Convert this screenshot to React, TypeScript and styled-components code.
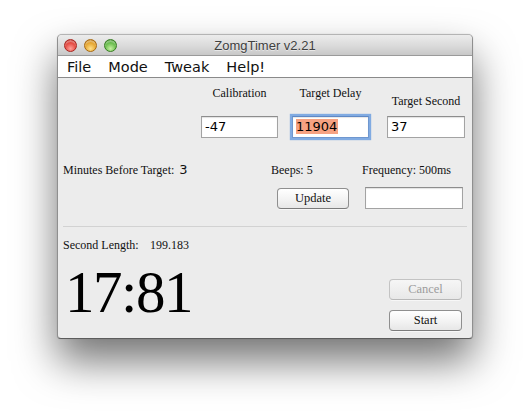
import React from "react";
import styled, { createGlobalStyle } from "styled-components";

const GlobalStyle = createGlobalStyle`
  html, body {
    margin: 0;
    padding: 0;
    background: #ffffff;
  }
  body {
    font-family: "Liberation Serif", "Times New Roman", serif;
    color: #111;
  }
`;

const Page = styled.div`
  width: 530px;
  height: 418px;
  box-sizing: border-box;
  padding: 34px 0 0 57px;
`;

const Window = styled.div`
  width: 416px;
  height: 305px;
  box-sizing: border-box;
  display: flex;
  flex-direction: column;
  border: 1px solid #8f8f8f;
  border-top-color: #b4b4b4;
  border-bottom-color: #5c5c5c;
  border-radius: 5px 5px 4px 4px;
  background: #ececec;
  overflow: hidden;
  box-shadow: 0 22px 42px rgba(0, 0, 0, 0.55), 0 0 1px rgba(0, 0, 0, 0.25);
`;

const TitleBar = styled.div`
  height: 20px;
  flex-shrink: 0;
  display: grid;
  grid-template-columns: 1fr auto 1fr;
  align-items: center;
  background: linear-gradient(#ececec, #dadada 55%, #c8c8c8);
`;

const Lights = styled.div`
  display: flex;
  gap: 7px;
  padding-left: 6px;
`;

const lightColors: Record<string, [string, string, string]> = {
  red: ["#ff9f98", "#e2423a", "#a8251f"],
  yellow: ["#ffe08a", "#e3a129", "#a8690f"],
  green: ["#c6f0a2", "#62b946", "#377d22"],
};

const Light = styled.span<{ $color: string }>`
  width: 13px;
  height: 13px;
  border-radius: 50%;
  box-sizing: border-box;
  border: 1px solid ${p => lightColors[p.$color][2]};
  background: radial-gradient(
      circle at 50% 78%,
      ${p => lightColors[p.$color][0]} 0%,
      ${p => lightColors[p.$color][1]} 60%,
      ${p => lightColors[p.$color][2]} 100%
    );
  box-shadow: inset 0 2px 1px rgba(255, 255, 255, 0.35);
`;

const Title = styled.div`
  font-family: "Liberation Sans", Arial, sans-serif;
  font-size: 13px;
  color: #404040;
  text-shadow: 0 1px 0 rgba(255, 255, 255, 0.5);
  padding-top: 1px;
`;

const MenuBar = styled.div`
  height: 23px;
  flex-shrink: 0;
  box-sizing: border-box;
  display: flex;
  background: #ffffff;
  border-top: 1px solid #9a9a9a;
  border-bottom: 1px solid #8a8a8a;
`;

const MenuItem = styled.div`
  font-family: "DejaVu Sans", sans-serif;
  font-size: 14.5px;
  line-height: 21px;
  padding: 1px 8.5px 0;
  color: #111;
  &:first-child {
    padding-left: 9px;
  }
`;

const Content = styled.div`
  flex: 1;
  display: flex;
  flex-direction: column;
  padding: 0 5px;
`;

const InputsRow = styled.div`
  display: grid;
  grid-template-columns: 91px 95px 78px;
  justify-content: end;
  padding-right: 2px;
`;

const InputColumn = styled.div<{ $width: number }>`
  width: ${p => p.$width}px;
  display: flex;
  flex-direction: column;
`;

const LabelCell = styled.div<{ $drop: number }>`
  height: 38px;
  box-sizing: border-box;
  padding-top: ${p => p.$drop}px;
  text-align: center;
  font-size: 12px;
  line-height: 14px;
  white-space: nowrap;
`;

const TextField = styled.div<{ $width: number; $focused?: boolean }>`
  width: ${p => p.$width}px;
  height: 22px;
  box-sizing: border-box;
  background: #fff;
  border: 1px solid ${p => (p.$focused ? "#6f97cf" : "#a3a3a3")};
  border-top-color: ${p => (p.$focused ? "#5f88c4" : "#8d8d8d")};
  box-shadow: ${p =>
    p.$focused
      ? "0 0 1px 2px rgba(110, 160, 225, 0.85), inset 0 1px 1px rgba(0,0,0,0.1)"
      : "inset 0 1px 1px rgba(0, 0, 0, 0.12)"};
  font-family: "DejaVu Sans", sans-serif;
  font-size: 13px;
  line-height: 20px;
  padding-left: 3px;
  color: #000;
`;

const Selected = styled.span`
  background: #f6a282;
  padding: 0 1px 0 0;
`;

const InfoRow = styled.div`
  margin-top: 25px;
  display: grid;
  grid-template-columns: 208px 91px auto;
  font-size: 12px;
  line-height: 14px;
  white-space: nowrap;
`;

const Value = styled.span`
  font-family: "DejaVu Sans", sans-serif;
  font-size: 13px;
  margin-left: 5px;
`;

const ActionRow = styled.div`
  margin-top: 10px;
  display: grid;
  grid-template-columns: 214px 88px 98px;
  align-items: center;
`;

const Button = styled.button<{ $width: number; $disabled?: boolean }>`
  width: ${p => p.$width}px;
  height: 21px;
  padding: 0;
  box-sizing: border-box;
  font-family: "Liberation Serif", "Times New Roman", serif;
  font-size: 12.5px;
  color: ${p => (p.$disabled ? "#9c9c9c" : "#111")};
  border: 1px solid ${p => (p.$disabled ? "#c3c3c3" : "#8f8f8f")};
  border-bottom-color: ${p => (p.$disabled ? "#b8b8b8" : "#7c7c7c")};
  border-radius: 4px;
  background: ${p =>
    p.$disabled
      ? "linear-gradient(#f6f6f6, #efefef 50%, #e8e8e8)"
      : "linear-gradient(#ffffff, #f4f4f4 50%, #e7e7e7)"};
  box-shadow: 0 1px 0 rgba(255, 255, 255, 0.6);
`;

const UpdateButton = styled(Button)`
  grid-column: 2;
`;

const Separator = styled.hr`
  margin: 17px 0 0;
  border: 0;
  height: 1px;
  background: #d2d2d2;
`;

const LengthRow = styled.div`
  margin-top: 11px;
  display: grid;
  grid-template-columns: 87px auto;
  font-size: 12px;
  line-height: 14px;
`;

const BottomRow = styled.div`
  flex: 1;
  margin-top: 10px;
  display: flex;
  justify-content: space-between;
  padding-bottom: 7px;
`;

const Clock = styled.div`
  font-family: "Liberation Serif", "Times New Roman", serif;
  font-size: 59px;
  line-height: 61px;
  letter-spacing: -1.5px;
  margin-left: 2px;
  color: #000;
`;

const ButtonStack = styled.div`
  align-self: flex-end;
  display: flex;
  flex-direction: column;
  gap: 10px;
  margin-right: 5px;
`;

const App = () => {
  return (
    <Page>
      <GlobalStyle />
      <Window>
        <TitleBar>
          <Lights>
            <Light $color="red" />
            <Light $color="yellow" />
            <Light $color="green" />
          </Lights>
          <Title>ZomgTimer v2.21</Title>
          <div />
        </TitleBar>
        <MenuBar>
          {["File", "Mode", "Tweak", "Help!"].map(m => (
            <MenuItem key={m}>{m}</MenuItem>
          ))}
        </MenuBar>
        <Content>
          <InputsRow>
            <InputColumn $width={77}>
              <LabelCell $drop={8}>Calibration</LabelCell>
              <TextField $width={77}>-47</TextField>
            </InputColumn>
            <InputColumn $width={77}>
              <LabelCell $drop={8}>Target Delay</LabelCell>
              <TextField $width={77} $focused>
                <Selected>11904</Selected>
              </TextField>
            </InputColumn>
            <InputColumn $width={78}>
              <LabelCell $drop={16}>Target Second</LabelCell>
              <TextField $width={78}>37</TextField>
            </InputColumn>
          </InputsRow>

          <InfoRow>
            <span>
              Minutes Before Target:<Value>3</Value>
            </span>
            <span>Beeps: 5</span>
            <span>Frequency: 500ms</span>
          </InfoRow>

          <ActionRow>
            <UpdateButton $width={72}>Update</UpdateButton>
            <TextField $width={98} />
          </ActionRow>

          <Separator />

          <LengthRow>
            <span>Second Length:</span>
            <span>199.183</span>
          </LengthRow>

          <BottomRow>
            <Clock>17:81</Clock>
            <ButtonStack>
              <Button $width={73} $disabled>
                Cancel
              </Button>
              <Button $width={73}>Start</Button>
            </ButtonStack>
          </BottomRow>
        </Content>
      </Window>
    </Page>
  );
};

export default App;
